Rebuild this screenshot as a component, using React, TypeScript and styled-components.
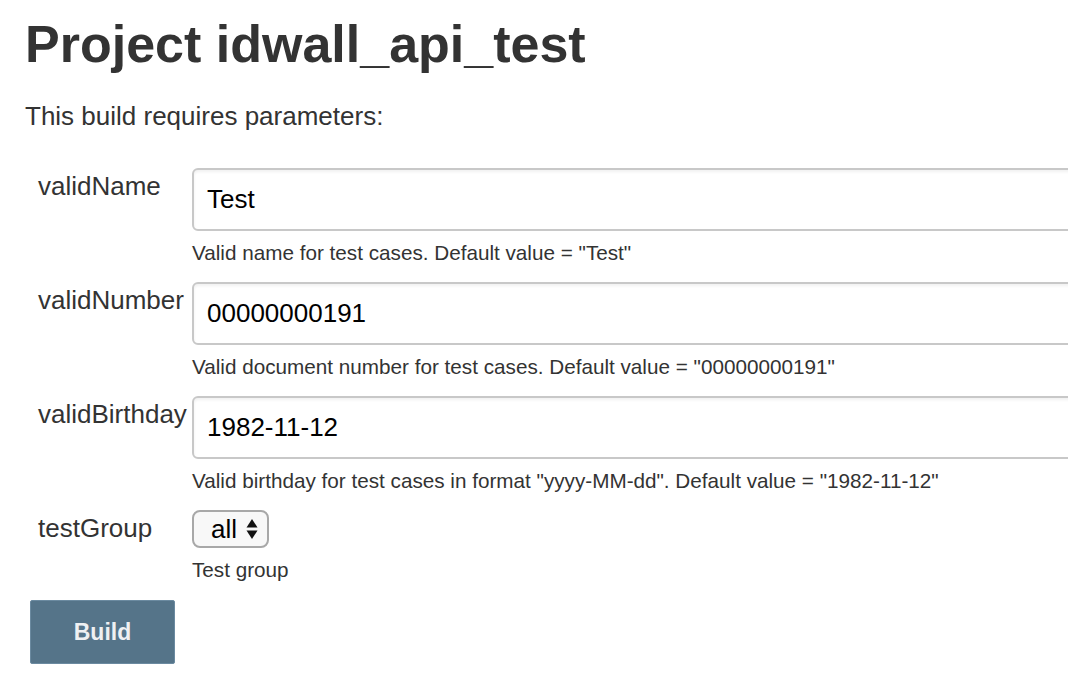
import React from "react";
import styled, { createGlobalStyle } from "styled-components";

const Global = createGlobalStyle`
  html, body { margin: 0; padding: 0; background: #fff; overflow: hidden; }
  body { font-family: "Liberation Sans", Arial, Helvetica, sans-serif; color: #333; }
`;

const Page = styled.div`
  width: 1068px;
  height: 692px;
  overflow: hidden;
  padding: 0 0 0 25px;
  box-sizing: border-box;
`;

const Title = styled.h1`
  margin: 0;
  padding-top: 12px;
  font-size: 52px;
  line-height: 64px;
  font-weight: bold;
  color: #333;
  white-space: nowrap;
`;

const Intro = styled.p`
  margin: 24px 0 0;
  font-size: 26px;
  line-height: 32px;
`;

const Form = styled.div`
  margin-top: 36px;
  display: grid;
  grid-template-columns: 167px 1000px;
  align-items: start;
`;

const Label = styled.div`
  padding: 3px 0 0 13px;
  font-size: 26px;
  line-height: 30px;
  white-space: nowrap;
`;

const Field = styled.div`
  display: flex;
  flex-direction: column;
  align-items: flex-start;
`;

const TextInput = styled.div`
  box-sizing: border-box;
  width: 1000px;
  height: 63px;
  border: 2px solid #c8c8c8;
  border-radius: 6px;
  box-shadow: inset 0 2px 3px rgba(0, 0, 0, 0.06);
  padding: 0 0 0 13px;
  display: flex;
  align-items: center;
  font-size: 26px;
  color: #000;
`;

const Help = styled.div`
  margin: 8px 0 0;
  font-size: 20.7px;
  line-height: 28px;
  height: 43px;
  white-space: nowrap;
`;

const Select = styled.div`
  box-sizing: border-box;
  height: 38px;
  border: 2px solid #a8a8a8;
  border-radius: 8px;
  background: #f8f8f8;
  padding: 0 9px 0 17px;
  display: flex;
  align-items: center;
  gap: 9px;
  font-size: 26px;
  color: #000;
`;

const Arrows = styled.svg`
  width: 12px;
  height: 22px;
`;

const BuildRow = styled.div`
  margin-top: 1px;
  margin-left: 5px;
`;

const Button = styled.button`
  box-sizing: border-box;
  width: 145px;
  height: 64px;
  border: 1px solid #6b8aa0;
  border-radius: 2px;
  background: #557489;
  color: #eef0f2;
  font-family: "Liberation Sans", Arial, sans-serif;
  font-weight: bold;
  font-size: 23px;
  padding: 0;
`;

type Param = { name: string; value: string; help: string };

const params: Param[] = [
  { name: "validName", value: "Test", help: 'Valid name for test cases. Default value = "Test"' },
  {
    name: "validNumber",
    value: "00000000191",
    help: 'Valid document number for test cases. Default value = "00000000191"',
  },
  {
    name: "validBirthday",
    value: "1982-11-12",
    help: 'Valid birthday for test cases in format "yyyy-MM-dd". Default value = "1982-11-12"',
  },
];

export default function App() {
  return (
    <Page>
      <Global />
      <Title>Project idwall_api_test</Title>
      <Intro>This build requires parameters:</Intro>
      <Form>
        {params.map((p) => (
          <React.Fragment key={p.name}>
            <Label>{p.name}</Label>
            <Field>
              <TextInput>{p.value}</TextInput>
              <Help>{p.help}</Help>
            </Field>
          </React.Fragment>
        ))}
        <Label>testGroup</Label>
        <Field>
          <Select>
            all
            <Arrows viewBox="0 0 12 22">
              <path d="M6 1 L11.5 9.5 H0.5 Z" fill="#111" />
              <path d="M6 21 L11.5 12.5 H0.5 Z" fill="#111" />
            </Arrows>
          </Select>
          <Help>Test group</Help>
        </Field>
      </Form>
      <BuildRow>
        <Button>Build</Button>
      </BuildRow>
    </Page>
  );
}
